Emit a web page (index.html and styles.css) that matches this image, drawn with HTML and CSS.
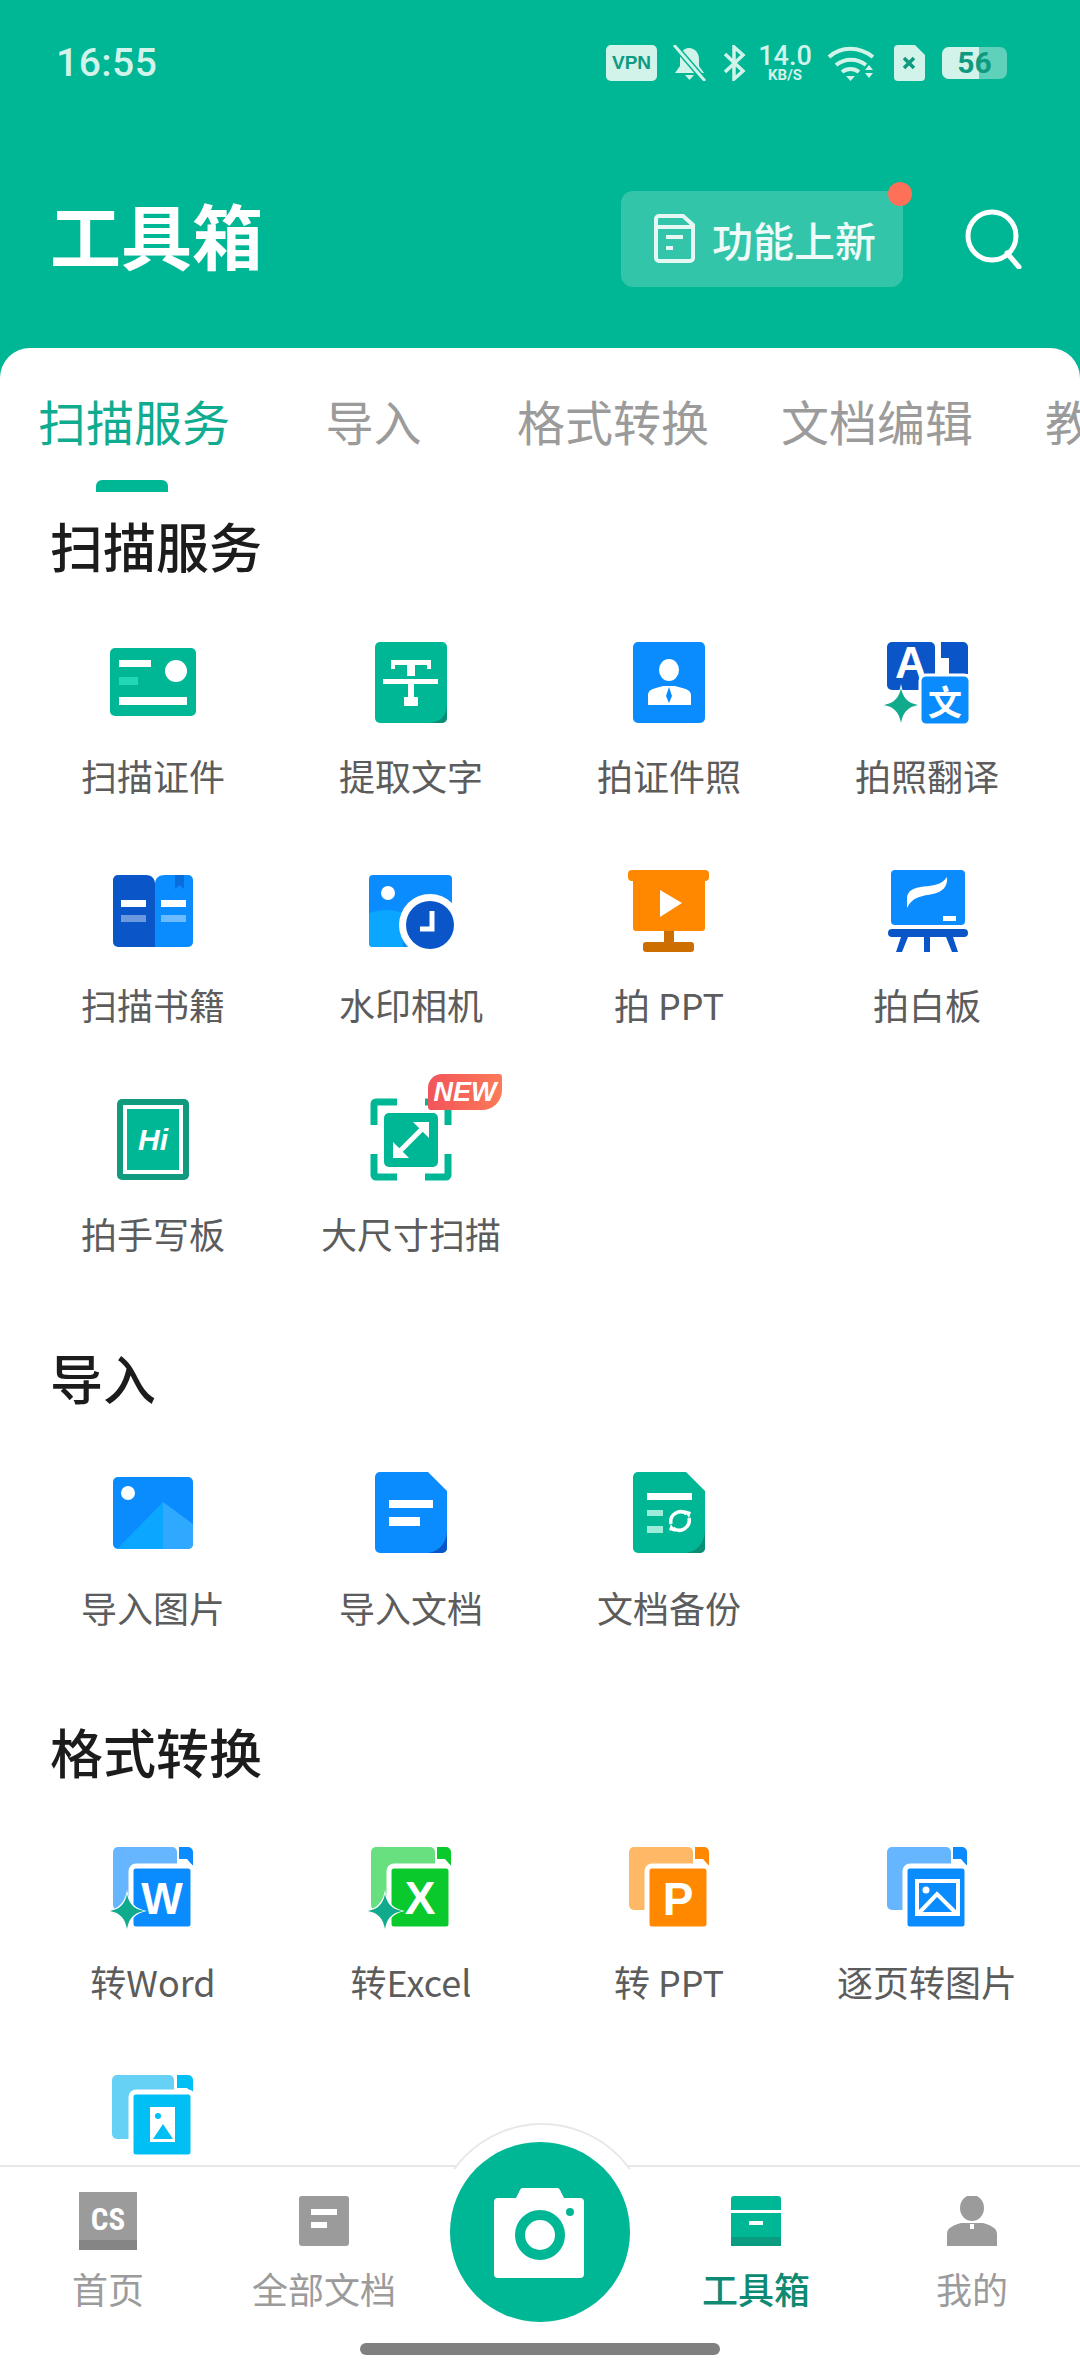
FILE: index.html
```html
<!DOCTYPE html>
<html lang="zh-CN">
<head>
    <meta charset="UTF-8">
    <title>工具箱</title>
    <link rel="stylesheet" href="styles.css">
</head>
<body>
<svg class="sprite">
    <symbol id="star" viewBox="0 0 100 100">
        <path d="M24 52C26 64 32 71 44 73C32 75 26 82 24 95C22 82 16 75 4 73C16 71 22 64 24 52Z" fill="#fff"/>
        <path d="M24 56C26 66 31 71 41 73C31 75 26 80 24 91C22 80 17 75 7 73C17 71 22 66 24 56Z" fill="#10ab8c"/>
    </symbol>
</svg>
<div class="page">
    <div class="header">
        <div class="status">
            <div class="time">16:55</div>
            <div class="status-icons">
                <div class="vpn">VPN</div>
                <svg class="st-bell" width="35" height="36" viewBox="0 0 35 36"><path d="M17 3c6 0 10 5 10 11v7l5 7H3l5-7v-7C8 8 11 3 17 3z" fill="#d2f3ea"/><path d="M13 30h9l-4.500 5z" fill="#d2f3ea"/><path d="M2 0l31 36" stroke="#00b795" stroke-width="6"/><path d="M2 0l31 36" stroke="#d2f3ea" stroke-width="3"/></svg>
                <svg class="st-bt" width="25" height="36" viewBox="0 0 25 36"><path d="M3 9l18 17-9 8V2l9 8L3 27" fill="none" stroke="#d2f3ea" stroke-width="3.500"/></svg>
                <div class="speed"><span class="speed-num">14.0</span><span class="speed-unit">KB/S</span></div>
                <svg class="st-wifi" width="50" height="36" viewBox="0 0 50 36"><path d="M2 12C14 1 32 1 46 12M9 20c9-7 21-7 30 0M16 27" fill="none" stroke="#d2f3ea" stroke-width="4"/><path d="M15 27c5-4 12-4 17 0" fill="none" stroke="#d2f3ea" stroke-width="4"/><path d="M19 31h9l-4.500 5zM42 20l4 5h-8zM38 28h8l-4 5z" fill="#d2f3ea"/></svg>
                <svg class="st-sim" width="31" height="36" viewBox="0 0 31 36"><path d="M4 0h17l10 10v22a4 4 0 0 1-4 4H4a4 4 0 0 1-4-4V4a4 4 0 0 1 4-4z" fill="#d2f3ea"/><path d="M10 13l10 10M20 13L10 23" stroke="#0e9a80" stroke-width="3.500"/></svg>
                <div class="battery"><span class="battery-fill"></span><span class="battery-num">56</span></div>
            </div>
        </div>
        <div class="titlebar">
            <div class="title">工具箱</div>
            <div class="news">
                <svg width="42" height="50" viewBox="0 0 42 50"><path d="M5 2h24l10 9v33a3 3 0 0 1-3 3H5a3 3 0 0 1-3-3V5a3 3 0 0 1 3-3zM2 13h37" fill="none" stroke="#e6f8f4" stroke-width="4"/><path d="M12 23h17M12 34h7" stroke="#e6f8f4" stroke-width="4"/></svg>
                <span>功能上新</span>
                <i class="news-dot"></i>
            </div>
            <svg class="search" width="60" height="60" viewBox="0 0 60 60"><circle cx="29" cy="27" r="24" fill="none" stroke="#fff" stroke-width="5"/><path d="M44 44l12 14" stroke="#fff" stroke-width="5" stroke-linecap="round"/></svg>
        </div>
    </div>

    <div class="sheet">
        <div class="tabs">
            <div class="tab active">扫描服务</div>
            <div class="tab wide">导入</div>
            <div class="tab">格式转换</div>
            <div class="tab">文档编辑</div>
            <div class="tab">教育学习</div>
        </div>

        <div class="section first">
            <div class="section-title">扫描服务</div>
            <div class="tools">
                <div class="tool">
                    <div class="tool-icon"><svg width="100" height="100" viewBox="0 0 100 100"><rect x="7" y="16" width="86" height="68" rx="5" fill="#00b795"/><rect x="16" y="28" width="32" height="7" fill="#fff"/><rect x="16" y="45" width="19" height="8" fill="#22d6b6"/><rect x="16" y="65" width="68" height="8" fill="#fff"/><circle cx="73" cy="39" r="11" fill="#fff"/></svg></div>
                    <div class="tool-label">扫描证件</div>
                </div>
                <div class="tool">
                    <div class="tool-icon"><svg width="100" height="100" viewBox="0 0 100 100"><rect x="14" y="10" width="72" height="81" rx="5" fill="#00b795"/><path d="M86 72v14a5 5 0 0 1-5 5H66c12 0 20-6 20-19z" fill="#0b8e74"/><path d="M30 28h40v9h-4v-4H54v11h-8V33H34v4h-4z" fill="#fff"/><rect x="22" y="47" width="55" height="5" fill="#fff"/><rect x="47" y="52" width="6" height="14" fill="#fff"/><rect x="43" y="65" width="14" height="9" rx="1" fill="#fff"/></svg></div>
                    <div class="tool-label">提取文字</div>
                </div>
                <div class="tool">
                    <div class="tool-icon"><svg width="100" height="100" viewBox="0 0 100 100"><rect x="14" y="10" width="72" height="81" rx="5" fill="#0a8cff"/><ellipse cx="50" cy="38" rx="10" ry="11" fill="#fff"/><path d="M29 73V63c0-6 8-7 15-9h12c7 2 16 3 16 9v10z" fill="#fff"/><path d="M50 55l3 9-3 7-3-7z" fill="#0a8cff"/></svg></div>
                    <div class="tool-label">拍证件照</div>
                </div>
                <div class="tool">
                    <div class="tool-icon"><svg width="100" height="100" viewBox="0 0 100 100"><rect x="10" y="10" width="48" height="48" rx="5" fill="#0a56c9"/><path d="M64 10h22a5 5 0 0 1 5 5v27H72V26h-8z" fill="#0a56c9"/><text class="ic-text" x="34" y="46" font-size="44" text-anchor="middle">A</text><rect x="43" y="43" width="50" height="50" rx="6" fill="#0a8cff" stroke="#fff" stroke-width="3"/><text class="ic-text" x="68" y="83" font-size="34" text-anchor="middle">文</text><use href="#star" width="100" height="100"/></svg></div>
                    <div class="tool-label">拍照翻译</div>
                </div>
                <div class="tool">
                    <div class="tool-icon"><svg width="100" height="100" viewBox="0 0 100 100"><path d="M15 14h28c6 0 9 4 9 9v63H15a5 5 0 0 1-5-5V19a5 5 0 0 1 5-5z" fill="#0a56c9"/><path d="M62 14h23a5 5 0 0 1 5 5v62a5 5 0 0 1-5 5H52V23c0-6 4-9 10-9z" fill="#0a8cff"/><path d="M72 14h9v14l-4.500-4-4.500 4z" fill="#0a6bdb"/><rect x="18" y="39" width="25" height="7" fill="#fff"/><rect x="18" y="54" width="25" height="7" fill="#fff" opacity=".4"/><rect x="58" y="39" width="25" height="7" fill="#fff"/><rect x="58" y="54" width="25" height="7" fill="#fff" opacity=".4"/></svg></div>
                    <div class="tool-label">扫描书籍</div>
                </div>
                <div class="tool">
                    <div class="tool-icon"><svg width="100" height="100" viewBox="0 0 100 100"><path d="M12 14h75a4 4 0 0 1 4 4v68H12a4 4 0 0 1-4-4V18a4 4 0 0 1 4-4z" fill="#0a8cff"/><path d="M8 52c12-4 24-4 34 0v34H12a4 4 0 0 1-4-4z" fill="#0aa6ff"/><circle cx="27" cy="32" r="7" fill="#fff"/><circle cx="69" cy="64" r="31" fill="#fff"/><circle cx="69" cy="64" r="24" fill="#0a56c9"/><path d="M71 50v18H59" fill="none" stroke="#fff" stroke-width="5"/></svg></div>
                    <div class="tool-label">水印相机</div>
                </div>
                <div class="tool">
                    <div class="tool-icon"><svg width="100" height="100" viewBox="0 0 100 100"><rect x="45" y="65" width="10" height="18" fill="#cc6f00"/><rect x="24" y="81" width="51" height="10" rx="3" fill="#cc6f00"/><rect x="9" y="9" width="81" height="11" rx="4" fill="#ff8800"/><rect x="14" y="12" width="72" height="58" rx="3" fill="#ff8800"/><path d="M41 29l22 13-22 14z" fill="#fff"/></svg></div>
                    <div class="tool-label">拍 PPT</div>
                </div>
                <div class="tool">
                    <div class="tool-icon"><svg width="100" height="100" viewBox="0 0 100 100"><rect x="14" y="9" width="74" height="55" rx="4" fill="#0a8cff"/><path d="M30 38c0-12 14-12 22-13 8-1 14-3 18-9 1 9-4 15-14 17-10 2-20 2-26 14z" fill="#fff"/><rect x="66" y="55" width="13" height="5" fill="#fff"/><rect x="11" y="68" width="80" height="8" rx="4" fill="#0a56c9"/><path d="M24 76h7l-6 15h-6zM47 76h6v15h-6zM69 76h7l5 15h-6z" fill="#0a56c9"/></svg></div>
                    <div class="tool-label">拍白板</div>
                </div>
                <div class="tool">
                    <div class="tool-icon"><svg width="100" height="100" viewBox="0 0 100 100"><rect x="14" y="9" width="72" height="81" rx="5" fill="#109a7e"/><rect x="20" y="15" width="60" height="69" fill="#fff"/><rect x="24" y="19" width="52" height="61" fill="#00b795"/><text class="ic-text hi" x="50" y="60" font-size="30" text-anchor="middle">Hi</text></svg></div>
                    <div class="tool-label">拍手写板</div>
                </div>
                <div class="tool">
                    <div class="tool-icon">
                        <svg width="100" height="100" viewBox="0 0 100 100"><path d="M36 12H15a2 2 0 0 0-2 2v21M64 12h21a2 2 0 0 1 2 2v21M36 87H15a2 2 0 0 1-2-2V64M64 87h21a2 2 0 0 0 2-2V64" fill="none" stroke="#00b795" stroke-width="7"/><rect x="23" y="23" width="54" height="54" rx="5" fill="#00b795"/><path d="M36 64l28-28" stroke="#fff" stroke-width="5"/><path d="M52 32h16v16zM32 52v16h16z" fill="#fff"/></svg>
                        <div class="badge-new">NEW</div>
                    </div>
                    <div class="tool-label">大尺寸扫描</div>
                </div>
            </div>
        </div>

        <div class="section">
            <div class="section-title">导入</div>
            <div class="tools">
                <div class="tool">
                    <div class="tool-icon"><svg width="100" height="100" viewBox="0 0 100 100"><rect x="10" y="13" width="80" height="72" rx="5" fill="#0a8cff"/><path d="M60 38L14 85h46z" fill="#0aa6ff"/><path d="M60 38l30 22v20a5 5 0 0 1-5 5H60z" fill="#2fa8ff"/><ellipse cx="25" cy="29" rx="7" ry="7" fill="#fff"/></svg></div>
                    <div class="tool-label">导入图片</div>
                </div>
                <div class="tool">
                    <div class="tool-icon"><svg width="100" height="100" viewBox="0 0 100 100"><path d="M19 8h48l19 19v57a5 5 0 0 1-5 5H19a5 5 0 0 1-5-5V13a5 5 0 0 1 5-5z" fill="#0a8cff"/><path d="M86 65v19a5 5 0 0 1-5 5H64c14 0 22-10 22-24z" fill="#0a56c9"/><rect x="28" y="36" width="44" height="8" fill="#fff"/><rect x="28" y="53" width="31" height="9" fill="#fff"/></svg></div>
                    <div class="tool-label">导入文档</div>
                </div>
                <div class="tool">
                    <div class="tool-icon"><svg width="100" height="100" viewBox="0 0 100 100"><path d="M19 8h48l19 19v57a5 5 0 0 1-5 5H19a5 5 0 0 1-5-5V13a5 5 0 0 1 5-5z" fill="#00b795"/><path d="M86 65v19a5 5 0 0 1-5 5H64c14 0 22-10 22-24z" fill="#0b8e74"/><rect x="28" y="29" width="45" height="7" fill="#fff"/><rect x="28" y="46" width="16" height="6" fill="#9cecd9"/><rect x="28" y="62" width="16" height="7" fill="#9cecd9"/><path d="M52 60a10 10 0 0 1 16-10M70 54a10 10 0 0 1-16 10" fill="none" stroke="#fff" stroke-width="3.500"/><path d="M65 46l7 2-2 6zM57 68l-7-2 2-6z" fill="#fff"/></svg></div>
                    <div class="tool-label">文档备份</div>
                </div>
            </div>
        </div>

        <div class="section">
            <div class="section-title">格式转换</div>
            <div class="tools">
                <div class="tool">
                    <div class="tool-icon"><svg width="100" height="100" viewBox="0 0 100 100"><rect x="10" y="9" width="64" height="63" rx="5" fill="#66b5ff"/><path d="M76 9h9a5 5 0 0 1 5 5v14l-6-7h-8v-7z" fill="#0a8cff"/><rect x="28" y="28" width="62" height="63" rx="5" fill="#0a8cff" stroke="#fff" stroke-width="5"/><text class="ic-text" x="59" y="76" font-size="44" text-anchor="middle">W</text><use href="#star" width="100" height="100"/></svg></div>
                    <div class="tool-label">转Word</div>
                </div>
                <div class="tool">
                    <div class="tool-icon"><svg width="100" height="100" viewBox="0 0 100 100"><rect x="10" y="9" width="64" height="63" rx="5" fill="#69e07f"/><path d="M76 9h9a5 5 0 0 1 5 5v14l-6-7h-8v-7z" fill="#0ac92d"/><rect x="28" y="28" width="62" height="63" rx="5" fill="#0ac92d" stroke="#fff" stroke-width="5"/><text class="ic-text" x="59" y="76" font-size="46" text-anchor="middle">X</text><use href="#star" width="100" height="100"/></svg></div>
                    <div class="tool-label">转Excel</div>
                </div>
                <div class="tool">
                    <div class="tool-icon"><svg width="100" height="100" viewBox="0 0 100 100"><rect x="10" y="9" width="64" height="63" rx="5" fill="#ffb866"/><path d="M76 9h9a5 5 0 0 1 5 5v14l-6-7h-8v-7z" fill="#ff8800"/><rect x="28" y="28" width="62" height="63" rx="5" fill="#ff8800" stroke="#fff" stroke-width="5"/><text class="ic-text" x="59" y="77" font-size="46" text-anchor="middle">P</text></svg></div>
                    <div class="tool-label">转 PPT</div>
                </div>
                <div class="tool">
                    <div class="tool-icon"><svg width="100" height="100" viewBox="0 0 100 100"><rect x="10" y="9" width="64" height="63" rx="5" fill="#66b5ff"/><path d="M76 9h9a5 5 0 0 1 5 5v14l-6-7h-8v-7z" fill="#0a8cff"/><rect x="28" y="28" width="62" height="63" rx="5" fill="#0a8cff" stroke="#fff" stroke-width="5"/><rect x="40" y="43" width="41" height="33" fill="none" stroke="#fff" stroke-width="4"/><circle cx="49" cy="52" r="3.500" fill="#fff"/><path d="M42 75l18-19 19 19" fill="none" stroke="#fff" stroke-width="4"/></svg></div>
                    <div class="tool-label">逐页转图片</div>
                </div>
                <div class="tool">
                    <div class="tool-icon"><svg width="100" height="100" viewBox="0 0 100 100"><rect x="9" y="8" width="62" height="64" rx="5" fill="#66d0f5"/><path d="M74 8h11a5 5 0 0 1 5 5v14l-6-6h-10z" fill="#00bff5"/><rect x="28" y="25" width="62" height="65" rx="5" fill="#00bff5" stroke="#fff" stroke-width="5"/><rect x="47" y="40" width="25" height="35" fill="#fff"/><circle cx="55" cy="49" r="3" fill="#00bff5"/><path d="M50 72l10-15 10 15z" fill="#00bff5"/></svg></div>
                </div>
            </div>
        </div>
    </div>

    <div class="tabbar">
        <div class="arc"></div>
        <div class="cam">
            <svg width="100" height="90" viewBox="0 0 100 90"><path d="M26 10l4-8a3 3 0 0 1 3-2h34a3 3 0 0 1 3 2l4 8h16a4 4 0 0 1 4 4v72a4 4 0 0 1-4 4H8a4 4 0 0 1-4-4V14a4 4 0 0 1 4-4z" fill="#fff"/><circle cx="50" cy="47" r="20" fill="none" stroke="#00b795" stroke-width="10"/><circle cx="80" cy="24" r="4" fill="#00b795"/></svg>
        </div>
        <div class="nav">
            <div class="nav-item">
                <div class="nav-icon"><svg width="58" height="58" viewBox="0 0 58 58"><rect width="58" height="58" fill="#9b9b9b"/><rect y="48" width="58" height="10" fill="#858585"/><text class="ic-text cs" x="29" y="38" font-size="31" text-anchor="middle">CS</text></svg></div>
                <div class="nav-label">首页</div>
            </div>
            <div class="nav-item">
                <div class="nav-icon"><svg width="50" height="50" viewBox="0 0 50 50"><rect width="50" height="50" rx="3" fill="#9b9b9b"/><rect x="12" y="13" width="26" height="6" fill="#fff"/><rect x="12" y="26" width="16" height="6" fill="#fff"/></svg></div>
                <div class="nav-label">全部文档</div>
            </div>
            <div class="nav-item"></div>
            <div class="nav-item on">
                <div class="nav-icon"><svg width="50" height="50" viewBox="0 0 50 50"><rect width="50" height="50" rx="3" fill="#00b795"/><rect y="41" width="50" height="9" fill="#0b9b80"/><rect y="14" width="50" height="3" fill="#fff"/><rect x="18" y="25" width="14" height="4" fill="#fff"/></svg></div>
                <div class="nav-label">工具箱</div>
            </div>
            <div class="nav-item">
                <div class="nav-icon"><svg width="50" height="50" viewBox="0 0 50 50"><ellipse cx="25" cy="12" rx="12" ry="13" fill="#9b9b9b"/><path d="M0 50V38c0-7 8-9 14-11h22c6 2 14 4 14 11v12z" fill="#9b9b9b"/><rect x="23" y="28" width="4" height="5" fill="#fff"/></svg></div>
                <div class="nav-label">我的</div>
            </div>
        </div>
        <div class="home-pill"></div>
    </div>
</div>
</body>
</html>
```

FILE: styles.css
```css
*{ padding: 0; margin: 0; box-sizing: border-box}
html,body{ width: 1080px; height: 2376px; overflow: hidden}
body{ font-family: "Noto Sans CJK SC", "Noto Sans", sans-serif; background: #fff}
.sprite{ display: none}
svg{ display: block}
.ic-text{ font-family: "Liberation Sans", "Noto Sans CJK SC", sans-serif; font-weight: 700; fill: #fff}
.ic-text.hi{ font-style: italic}
.ic-text.cs{ font-family: "Roboto", sans-serif; font-stretch: condensed}

.page{ width: 1080px; height: 2376px; display: flex; flex-direction: column; background: #00b795}

/* header */
.header{ height: 348px; flex: none}
.status{ height: 126px; padding: 0 73px 0 56px; display: flex; align-items: center; justify-content: space-between}
.time{ font-family: "Roboto", sans-serif; font-size: 39px; font-weight: 500; color: #d2f3ea; letter-spacing: .5px}
.status-icons{ display: flex; align-items: center; height: 36px}
.vpn{ width: 51px; height: 36px; border-radius: 5px; background: #d2f3ea; color: #0e9a80;
    font: 700 19px/36px "Liberation Sans", sans-serif; text-align: center}
.st-bell{ margin-left: 15px}
.st-bt{ margin-left: 15px}
.speed{ width: 54px; margin-left: 11px; display: flex; flex-direction: column; align-items: center;
    font-family: "Roboto", sans-serif; color: #d2f3ea; font-weight: 500}
.speed-num{ font-size: 27px; line-height: 24px}
.speed-unit{ font-size: 15px; line-height: 14px; font-weight: 700}
.st-wifi{ margin-left: 15px}
.st-sim{ margin-left: 17px}
.battery{ width: 65px; height: 32px; margin-left: 17px; border-radius: 7px; background: #5fd0ba; position: relative; overflow: hidden;
    display: flex; align-items: center; justify-content: center}
.battery-fill{ position: absolute; left: 0; top: 0; bottom: 0; width: 37px; background: #d2f3ea}
.battery-num{ position: relative; font: 700 30px/32px "Roboto", sans-serif; color: #0e9a80}

.titlebar{ height: 96px; margin-top: -61px; margin-top: 65px; margin-top: 65px; padding: 0 57px 0 50px; display: flex; align-items: center}
.title{ flex: 1; font-size: 71px; line-height: 84px; font-weight: 700; color: #fff; padding-bottom: 12px}
.news{ width: 282px; height: 96px; border-radius: 12px; background: rgba(255,255,255,.2); position: relative;
    display: flex; align-items: center; padding-left: 33px; gap: 16px; color: #eefbf8; font-size: 41px; font-weight: 500}
.news-dot{ position: absolute; right: -9px; top: -9px; width: 24px; height: 24px; border-radius: 50%; background: #ff7058}
.search{ margin-left: 60px}

/* tabs */
.sheet{ flex: 1; min-height: 0; overflow: hidden; background: #fff; border-radius: 30px 30px 0 0; padding-top: 0}
.tabs{ height: 144px; padding: 24px 0 0 2px; display: flex; white-space: nowrap; overflow: hidden}
.tab{ flex: none; padding: 0 36px; font-size: 48px; line-height: 96px; color: #9b9b9b; position: relative}
.tab.wide{ width: 215px; text-align: center}
.tab.active{ color: #10ac90}
.tab.active::after{ content: ""; position: absolute; left: 94px; bottom: 0; width: 72px; height: 12px;
    border-radius: 6px 6px 0 0; background: #00b795}

/* tools */
.section{ margin-top: 39px}
.section.first{ margin-top: 0}
.section-title{ padding-left: 50px; height: 106px; font-size: 53px; line-height: 106px; font-weight: 500; color: #1c1c1c}
.tools{ padding: 0 24px; display: grid; grid-template-columns: repeat(4, 258px)}
.tool{ height: 229px; padding-top: 34px; display: flex; flex-direction: column; align-items: center}
.tool-icon{ width: 100px; height: 100px; position: relative}
.tool-label{ margin-top: 18px; font-size: 36px; line-height: 50px; color: #5c5c5c; white-space: nowrap}
.badge-new{ position: absolute; left: 67px; top: -16px; width: 74px; height: 36px; border-radius: 14px 3px 20px 3px;
    background: linear-gradient(90deg, #f2545a, #fb7a58); color: #fff; text-align: center;
    font: italic 700 27px/36px "Liberation Sans", sans-serif}

/* bottom bar */
.tabbar{ flex: none; height: 211px; background: #fff; border-top: 2px solid #e8e8e8; position: relative}
.arc{ position: absolute; left: 433px; top: -44px; width: 214px; height: 46px; overflow: hidden}
.arc::before{ content: ""; display: block; width: 214px; height: 214px; border-radius: 50%; border: 2px solid #e8e8e8; background: #fff}
.cam{ position: absolute; left: 450px; top: -25px; width: 180px; height: 180px; border-radius: 50%; background: #00b795;
    display: flex; align-items: center; justify-content: center; padding-top: 1px}
.nav{ padding-top: 24px; display: grid; grid-template-columns: repeat(5, 216px)}
.nav-item{ display: flex; flex-direction: column; align-items: center}
.nav-icon{ height: 60px; display: flex; align-items: center; justify-content: center}
.nav-label{ margin-top: 12px; font-size: 36px; line-height: 50px; color: #9b9b9b}
.nav-item.on .nav-label{ color: #0e8a72; font-weight: 500}
.home-pill{ width: 360px; height: 12px; margin: 30px auto 0; border-radius: 6px; background: #808080}
```
